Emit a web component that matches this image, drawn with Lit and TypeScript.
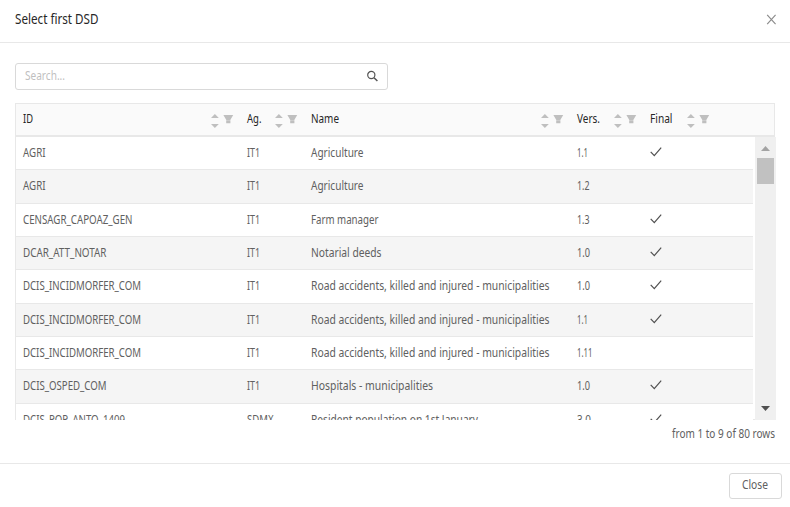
import { LitElement, html, css, svg, nothing } from 'lit';
import { customElement, property } from 'lit/decorators.js';

/** A single line of text condensed to a given width. */
@customElement('fit-text')
class FitText extends LitElement {
  @property() text = '';
  @property({ type: Number }) width = 50;
  static styles = css`
    :host { display: block; flex: none; height: 20px; }
    svg { display: block; overflow: visible; fill: currentColor; }
  `;
  render() {
    return html`<svg width=${this.width} height="20">${svg`<text x="0" y="15" textLength=${this.width} lengthAdjust="spacingAndGlyphs">${this.text}</text>`}</svg>`;
  }
}

type Label = [string, number];
interface Row { id: Label; ag: Label; name: Label; vers: Label; final: boolean; tall?: boolean; }

const IT1: Label = ['IT1', 13];
const INCID: Label = ['DCIS_INCIDMORFER_COM', 118];
const ROAD: Label = ['Road accidents, killed and injured - municipalities', 238.5];
const ROWS: Row[] = [
  { id: ['AGRI', 22.5], ag: IT1, name: ['Agriculture', 52.5], vers: ['1.1', 11], final: true },
  { id: ['AGRI', 22.5], ag: IT1, name: ['Agriculture', 52.5], vers: ['1.2', 12.5], final: false, tall: true },
  { id: ['CENSAGR_CAPOAZ_GEN', 109.5], ag: IT1, name: ['Farm manager', 67.5], vers: ['1.3', 12.5], final: true },
  { id: ['DCAR_ATT_NOTAR', 83.5], ag: IT1, name: ['Notarial deeds', 70.5], vers: ['1.0', 13], final: true },
  { id: INCID, ag: IT1, name: ROAD, vers: ['1.0', 13], final: true, tall: true },
  { id: INCID, ag: IT1, name: ROAD, vers: ['1.1', 11], final: true },
  { id: INCID, ag: IT1, name: ROAD, vers: ['1.11', 15.5], final: false },
  { id: ['DCIS_OSPED_COM', 83.5], ag: IT1, name: ['Hospitals - municipalities', 122], vers: ['1.0', 13], final: true, tall: true },
  { id: ['DCIS_POP_ANTO_1409', 102], ag: ['SDMX', 26.5], name: ['Resident population on 1st January', 167], vers: ['3.0', 14], final: true },
];
const HEADS: Label[] = [['ID', 10], ['Ag.', 14.5], ['Name', 28], ['Vers.', 23], ['Final', 22.5]];

const t = (l: Label) => html`<fit-text .text=${l[0]} .width=${l[1]}></fit-text>`;

@customElement('app-root')
class AppRoot extends LitElement {
  static styles = css`
    :host {
      display: flex; flex-direction: column; box-sizing: border-box;
      width: 790px; height: 507px; overflow: hidden; background: #fff;
      font: 12.6px "Noto Sans", "Open Sans", sans-serif; color: #606060;
    }
    * { box-sizing: border-box; }
    svg { display: block; flex: none; }
    .top {
      height: 43px; padding: 9px 14px 0 15px; border-bottom: 1px solid #e8e8e8;
      display: flex; justify-content: space-between; color: #262626; font-size: 13.6px;
    }
    .x { margin-top: 5px; }
    .main { height: 420px; padding: 20px 15px 0; }
    .search {
      width: 373px; height: 27px; border: 1px solid #d9d9d9; border-radius: 3px;
      padding: 1px 9px; display: flex; justify-content: space-between; color: #bfbfbf;
    }
    .glass { margin-top: 5px; }
    .head {
      margin-top: 13px; height: 34px; display: grid; grid-template-columns: 223px 64px 266px 73px 73px;
      border: 1px solid #e8e8e8; border-bottom-width: 2px; background: #fafafa; color: #262626;
    }
    .hcell { display: flex; justify-content: space-between; padding: 4px 5px 0 8px; }
    .hcell:first-child, .cell:first-child { padding-left: 7px; }
    .tools { margin-top: 6px; }
    .body { display: flex; height: 283px; width: 761px; overflow: hidden; }
    .rows { width: 738px; border-left: 1px solid #e8e8e8; overflow: hidden; }
    .row {
      height: 33px; display: grid; grid-template-columns: 223px 64px 266px 73px 1fr;
      border-bottom: 1px solid #e8e8e8;
    }
    .row.tall { height: 34px; }
    .row:nth-child(even) { background: #f5f5f5; }
    .cell { padding: 5px 0 0 8px; }
    .check { margin-top: 5px; }
    .gap { width: 2px; border-bottom: 1px solid #e8e8e8; }
    .bar {
      width: 21px; background: #f0f0f0; display: flex; flex-direction: column; align-items: center;
      padding: 9px 0 9px;
    }
    .thumb { width: 17px; height: 26px; margin-top: 7px; background: #c1c1c1; }
    .down { margin-top: auto; }
    .count { display: flex; justify-content: flex-end; padding-top: 3px; }
    .foot {
      height: 44px; border-top: 1px solid #e8e8e8; padding: 9px 8px 0 0;
      display: flex; justify-content: flex-end;
    }
    .close {
      width: 53px; height: 26px; border: 1px solid #d9d9d9; border-radius: 3px;
      display: flex; justify-content: center; padding-right: 1px;
    }
  `;

  tools() {
    return html`<svg class="tools" width="23" height="16" fill="#bfbfbf">
      <path d="M0 4H7.8L3.9 0Z M0 10H7.8L3.9 14Z" />
      <path d="M12.4 1H22.2L19.3 6H15.3Z M15.2 6.3H19.4V9.2H15.2Z" />
    </svg>`;
  }

  render() {
    return html`
      <header class="top">
        ${t(['Select first DSD', 83.5])}
        <svg class="x" width="10" height="11"><path d="M1.2 0.8L9.6 10.2M9.6 0.8L1.2 10.2" fill="none" stroke="#8c8c8c" stroke-width="1.2" /></svg>
      </header>
      <main class="main">
        <div class="search">
          ${t(['Search...', 40])}
          <svg class="glass" width="12" height="12" fill="none" stroke="#555" stroke-width="1.2"><circle cx="5.3" cy="5" r="3.6" /><path d="M8 7.7L11.4 11" stroke-width="1.5" /></svg>
        </div>
        <div class="head">${HEADS.map(h => html`<div class="hcell">${t(h)}${this.tools()}</div>`)}</div>
        <div class="body">
          <div class="rows">
            ${ROWS.map(r => html`<div class="row ${r.tall ? 'tall' : ''}">
              <div class="cell">${t(r.id)}</div>
              <div class="cell">${t(r.ag)}</div>
              <div class="cell">${t(r.name)}</div>
              <div class="cell">${t(r.vers)}</div>
              <div class="cell">${r.final ? html`<svg class="check" width="12" height="12"><path d="M0.7 4.8L4.3 8.6L11.2 0.6" fill="none" stroke="#505050" stroke-width="1.2" /></svg>` : nothing}</div>
            </div>`)}
          </div>
          <div class="gap"></div>
          <div class="bar">
            <svg width="9" height="5"><path d="M0 5L4.5 0L9 5Z" fill="#a3a3a3" /></svg>
            <div class="thumb"></div>
            <svg class="down" width="9" height="5"><path d="M0 0L4.5 5L9 0Z" fill="#505050" /></svg>
          </div>
        </div>
        <div class="count">${t(['from 1 to 9 of 80 rows', 103])}</div>
      </main>
      <footer class="foot"><div class="close">${t(['Close', 26])}</div></footer>
    `;
  }
}
